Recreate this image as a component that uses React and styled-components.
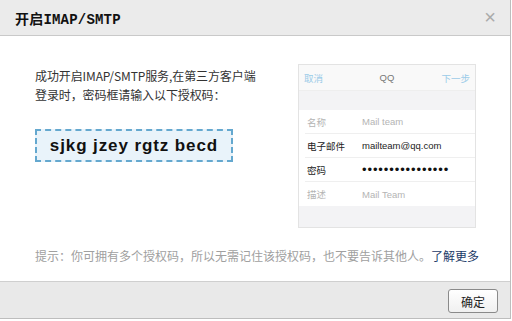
import styled, { createGlobalStyle } from "styled-components";

const Global = createGlobalStyle`
  html, body {
    margin: 0;
    padding: 0;
    background: #fff;
  }
  * {
    box-sizing: border-box;
  }
`;

const Dialog = styled.div`
  width: 511px;
  height: 319px;
  display: flex;
  flex-direction: column;
  border-right: 1px solid #bdbdbd;
  border-bottom: 1px solid #bdbdbd;
  font-family: "Noto Sans CJK SC", "Liberation Sans", sans-serif;
`;

const TitleBar = styled.div`
  height: 36px;
  flex: none;
  display: flex;
  align-items: center;
  justify-content: space-between;
  padding: 0 14px 0 15px;
  background: #ebebeb;
  border-bottom: 1px solid #c9c9c9;
`;

const Title = styled.div`
  font-family: "Liberation Mono", "Noto Sans CJK SC", monospace;
  font-weight: bold;
  font-size: 14px;
  color: #111;
  letter-spacing: 0.2px;
`;

const Close = styled.span`
  font-family: "Liberation Sans", sans-serif;
  font-size: 20px;
  line-height: 1;
  color: #aaa;
  margin-top: -1px;
`;

const Body = styled.div`
  flex: 1;
  background: #fff;
  padding: 28px 35px 0;
`;

const Content = styled.div`
  display: flex;
  justify-content: space-between;
`;

const Left = styled.div`
  width: 240px;
  padding-top: 2px;
`;

const Intro = styled.p`
  margin: 0;
  font-size: 12px;
  line-height: 19px;
  color: #333;
  white-space: nowrap;
  letter-spacing: -0.1px;
`;

const CodeBox = styled.div`
  margin-top: 25px;
  width: 198px;
  height: 33px;
  display: flex;
  align-items: center;
  justify-content: center;
  background: #e9f3fa;
  border: 2px dashed #64a8cf;
  font-family: "Liberation Sans", Arial, sans-serif;
  font-weight: bold;
  font-size: 17px;
  letter-spacing: 0.9px;
  color: #111;
`;

const Phone = styled.div`
  width: 178px;
  height: 164px;
  margin-right: -1px;
  display: flex;
  flex-direction: column;
  border: 1px solid #e3e3e3;
  background: #f3f3f5;
  font-family: "Liberation Sans", "Noto Sans CJK SC", sans-serif;
  font-size: 9.5px;
`;

const PhoneNav = styled.div`
  height: 26px;
  flex: none;
  display: grid;
  grid-template-columns: 1fr auto 1fr;
  align-items: center;
  padding: 0 5px;
  background: #f9f9f9;
  border-bottom: 1px solid #eeeeee;
`;

const NavLink = styled.span`
  color: #9bcbe8;
  text-align: ${(p) => (p.$right ? "right" : "left")};
`;

const NavTitle = styled.span`
  color: #777;
`;

const Gap = styled.div`
  height: ${(p) => p.$h}px;
  flex: none;
`;

const Rows = styled.div`
  background: #fff;
  padding-left: 6px;
`;

const Row = styled.div`
  height: 24px;
  display: flex;
  align-items: center;
  border-bottom: ${(p) => (p.$last ? "none" : "1px solid #efefef")};
`;

const Label = styled.span`
  width: 57px;
  padding-left: 2px;
  color: ${(p) => (p.$muted ? "#b4b4b4" : "#222")};
`;

const Value = styled.span`
  color: ${(p) => (p.$muted ? "#b4b4b4" : "#222")};
`;

const Dots = styled.span`
  font-size: 13px;
  letter-spacing: 0.9px;
  color: #111;
`;

const Hint = styled.p`
  margin: 19px -20px 0 0;
  font-size: 12px;
  line-height: 18px;
  color: #a0a0a0;
  white-space: nowrap;
`;

const More = styled.a`
  color: #1b3a68;
  text-decoration: none;
`;

const Footer = styled.div`
  height: 37px;
  flex: none;
  display: flex;
  align-items: flex-start;
  justify-content: flex-end;
  padding: 7px 12px 0 0;
  background: #e9e9e9;
  border-top: 1px solid #cfcfcf;
`;

const Button = styled.button`
  width: 50px;
  height: 24px;
  padding: 0;
  font-family: "Noto Sans CJK SC", sans-serif;
  font-size: 12px;
  color: #222;
  background: linear-gradient(#ffffff, #f0f0f0);
  border: 1px solid #8a8a8a;
  border-radius: 3px;
`;

export default function App() {
  return (
    <>
      <Global />
      <Dialog>
        <TitleBar>
          <Title>开启IMAP/SMTP</Title>
          <Close>×</Close>
        </TitleBar>
        <Body>
          <Content>
            <Left>
              <Intro>
                成功开启IMAP/SMTP服务,在第三方客户端
                <br />
                登录时，密码框请输入以下授权码：
              </Intro>
              <CodeBox>sjkg jzey rgtz becd</CodeBox>
            </Left>
            <Phone>
              <PhoneNav>
                <NavLink>取消</NavLink>
                <NavTitle>QQ</NavTitle>
                <NavLink $right>下一步</NavLink>
              </PhoneNav>
              <Gap $h={19} />
              <Rows>
                <Row>
                  <Label $muted>名称</Label>
                  <Value $muted>Mail team</Value>
                </Row>
                <Row>
                  <Label>电子邮件</Label>
                  <Value>mailteam@qq.com</Value>
                </Row>
                <Row>
                  <Label>密码</Label>
                  <Dots>••••••••••••••••</Dots>
                </Row>
                <Row $last>
                  <Label $muted>描述</Label>
                  <Value $muted>Mail Team</Value>
                </Row>
              </Rows>
            </Phone>
          </Content>
          <Hint>
            提示：你可拥有多个授权码，所以无需记住该授权码，也不要告诉其他人。
            <More href="#">了解更多</More>
          </Hint>
        </Body>
        <Footer>
          <Button>确定</Button>
        </Footer>
      </Dialog>
    </>
  );
}
